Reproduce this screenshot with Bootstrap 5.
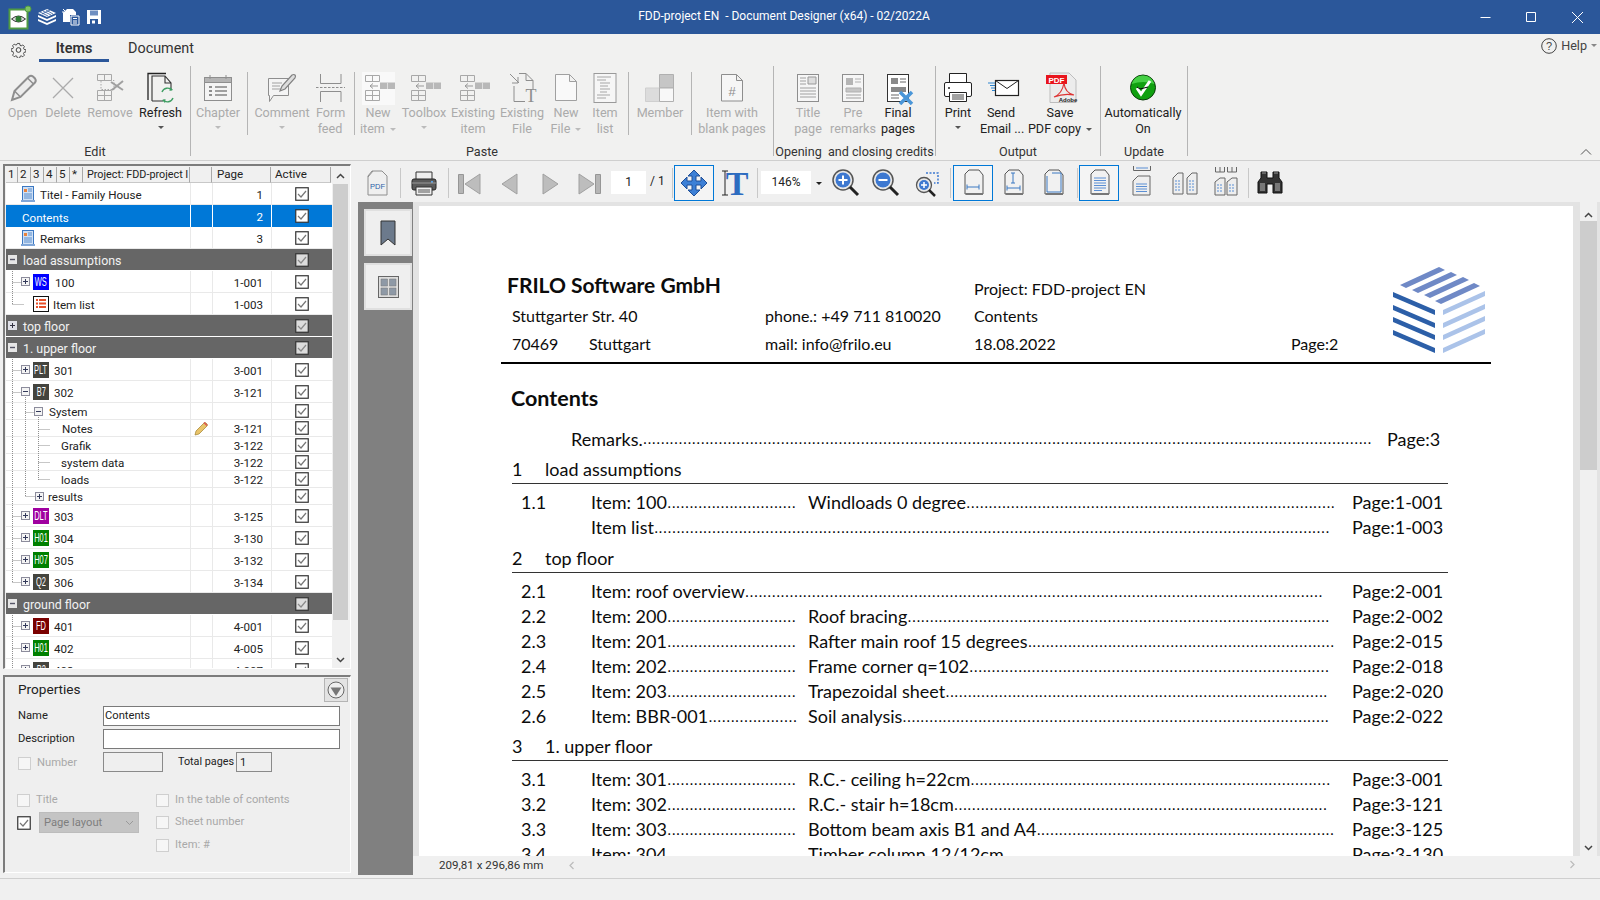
<!doctype html>
<html lang="en">
<head>
<meta charset="utf-8">
<title>FDD-project EN - Document Designer</title>
<link href="https://cdn.jsdelivr.net/npm/bootstrap@5.3.0/dist/css/bootstrap.min.css" rel="stylesheet">
<style>
html,body{height:900px;overflow:hidden}
body{background:#f0f0f0;font-family:Roboto,"Open Sans",sans-serif;color:#222;width:1600px}
.tbar{height:34px;background:#2b579a;color:#fff;position:relative}
.tbar-title{position:absolute;left:0;right:32px;top:0;line-height:32px;text-align:center;font-size:12px}
.tbar-l{padding-left:8px;gap:0}
.win-ctl{position:absolute;right:0;top:0;height:34px}
.rib{background:#f1f1f0;border-bottom:1px solid #cfcfcf;height:127px;position:relative}
.rtabs{height:32px;padding-left:11px;position:relative}
.tab-it{width:70px;height:28px;line-height:29px;text-align:center;font-size:14.4px;color:#333}
.tab-it.on{font-weight:600;border-bottom:3px solid #2b579a}
.tab-one{margin-left:13px}.tab-two{margin-left:17px}
.helpb{position:absolute;right:3px;top:3px;font-size:12.6px;color:#444;gap:4px;line-height:18px}
.rgroups{height:94px}
.rgroup{height:90px;border-right:1px solid #b5b5b5;position:relative;flex:none;align-items:flex-start}
.gp{width:191px;padding-left:2px}.gq{width:583px}.gr{width:162px}.gs{width:165px}.gt{width:87px}
.rlabel{position:absolute;left:0;right:0;top:78px;line-height:16px;text-align:center;font-size:12.6px;color:#333;white-space:nowrap}
.rb.btn{padding:0;border:0;border-radius:0;flex:none;font-size:12.6px;line-height:16px;color:#222;display:block;text-align:center;white-space:nowrap;opacity:1;font-family:inherit}
.rb.btn:disabled{opacity:1;color:#ababab}
.ri{width:40px;height:35px;display:block;margin:4px 0 0 calc(50% - 20px)}
.rb .rcaret{display:inline-block;border-left:3px solid transparent;border-right:3px solid transparent;border-top:3px solid #555;vertical-align:middle;margin-left:2px}
.rb.btn:disabled .rcaret{border-top-color:#bbb}
.rb .sol{display:block;width:6px;height:0;margin:5px auto 0}
.rsep{width:1px;height:63px;margin-top:6px;background:#b5b5b5;flex:none}
.w28{width:28px}.w36{width:36px}.w40{width:40px}.w41{width:41px}.w42{width:42px}.w44{width:44px}.w46{width:46px}.w47{width:47px}.w52{width:52px}.w54{width:54px}.w62{width:62px}.w68{width:68px}.w76{width:76px}.w80{width:80px}.w84{width:84px}
.g1{margin-left:1px}.g2{margin-left:2px}.g3{margin-left:3px}.g4{margin-left:4px}.g5{margin-left:5px}.g6{margin-left:6px}.g10{margin-left:10px}.g12{margin-left:12px}
.mainz{height:717px;padding-top:3px}
.leftc{width:348px;margin-left:3px;flex:none}
.tpanel{height:505px;border-left:2px solid #7c7c7c;border-top:2px solid #7c7c7c;border-right:1px solid #fff;border-bottom:1px solid #fff;background:#f0f0f0;padding:1px 0 0 1px;overflow:hidden}
.thead-cells{height:16px;font-size:11.6px;background:#f0f0f0;color:#222;line-height:15px}
.thc{border-right:1px solid #a8a8a8;border-bottom:1px solid #c8c8c8;padding-left:2px;overflow:hidden;white-space:nowrap;flex:none}
.w12{width:12px}.w13{width:13px}.w107{width:107px;padding-left:4px;font-size:10.8px}.w22{width:22px}.w59{width:59px;padding-left:5px}.w60{width:60px;padding-left:4px}
.tbody-wrap{width:326px;background:#fff;height:485px;overflow:hidden;position:relative}
.tlines{position:absolute;left:0;top:0;width:60px;height:485px;pointer-events:none}
.tr-r{height:22px;display:flex;font-size:11.6px;line-height:22px;border-bottom:1px solid #e9e9e9;color:#222}
.tr-r.sm{height:17px;line-height:17px}
.tr-r.grp{background:#666;color:#f2f2f2;font-size:12.4px;border-bottom:1px solid #fff}
.tr-r.sel{background:#0078d7;color:#fff;border-bottom:0}
.cn{width:185px;flex:none;display:flex;align-items:center;border-right:1px solid #e9e9e9;white-space:nowrap;overflow:hidden}
.cn>span:last-child{padding-top:3px}
.cp{padding-top:1px}
.cm{width:22px;flex:none;border-right:1px solid #e9e9e9;display:flex;align-items:center;justify-content:center}
.cp{width:59px;flex:none;text-align:right;padding-right:8px;border-right:1px solid #e9e9e9}
.ca{width:60px;flex:none;display:flex;align-items:center;justify-content:center}
.sel .cn,.sel .cm,.sel .cp{border-right-color:#fff}
.grp .cn,.grp .cm,.grp .cp{border-right-color:transparent}
.cb{width:14px;height:14px;flex:none}
.xp{width:9px;height:9px;flex:none}
.idoc{width:14px;height:16px;flex:none}
.ilist{width:16px;height:16px;flex:none}
.p2{padding-left:2px}.p15{padding-left:15px}.p16{padding-left:16px}.p27{padding-left:27px}.p28{padding-left:28px}.p29{padding-left:29px}.p55{padding-left:55px}.p56{padding-left:56px}
.ml3{margin-left:3px}.ml4{margin-left:4px}.ml5{margin-left:5px}.ml6{margin-left:6px}
.ptag{width:16px;height:16px;flex:none;color:#fff;font-family:"Liberation Sans",sans-serif;font-size:12px;line-height:16px;overflow:hidden;display:flex;justify-content:center;padding:0!important}
.ptag b{font-weight:400;flex:none;display:block;transform:scaleX(.62)}
.t-blue{background:#0000ff}.t-dark{background:#44443e}.t-pur{background:#a000a0}.t-grn{background:#008000}.t-red{background:#7a0000}
.vscr{width:17px;flex:none;background:#f0f0f0;display:flex;flex-direction:column;height:501px}
.vscr .arr{height:17px;flex:none;display:flex;align-items:center;justify-content:center}
.vscr .thumbz{background:#cdcdcd;margin:0 1px}
.t436{height:436px}.flex-sp{flex:1}
.props{height:198px;margin-top:6px;border-left:2px solid #7c7c7c;border-top:2px solid #7c7c7c;border-right:1px solid #fff;border-bottom:1px solid #fff;background:#efefef;font-size:11.2px;color:#222}
.ptop{height:29px;padding-left:13px;padding-right:2px;font-size:13.6px}
.ptxt{padding-top:2px}
.pbtn{width:24px;height:24px;margin-top:1px;border:1px solid #b4b4b4;background:#e3e3e3;display:flex;align-items:center;justify-content:center}
.frow{height:20px;margin-bottom:3px;padding-left:13px}
.flab{width:85px;flex:none}
.form-control.fin{width:237px;height:20px;min-height:0;padding:0 1px 2px;border:1px solid #7a7a7a;border-radius:0;font-size:11.2px;line-height:17px;color:#222;background:#fff;font-family:inherit}
.form-control.fin2{width:60px;background:#efefef;height:20px;min-height:0;padding:0;border:1px solid #8a8a8a;border-radius:0}
.form-control.fin3{width:36px;background:#efefef;height:20px;min-height:0;padding:0 3px;border:1px solid #8a8a8a;border-radius:0;font-size:11.2px;line-height:17px;font-family:inherit}
.dis{color:#a9a9a9}
.bx{width:13px;height:13px;flex:none;background:#f6f6f6;border:1px solid #cfcfcf}
.flab2{width:85px;flex:none;display:flex;align-items:center;gap:6px;padding-top:3px}
.totl{margin-left:15px;margin-right:2px;font-size:10.8px}
.pgrid{display:grid;grid-template-columns:139px 1fr;grid-auto-rows:22.5px;margin-top:17px;padding-left:12px;align-items:center}
.pcell{display:flex;align-items:center;gap:6px}
.psel{width:100px;height:21px;margin-left:2px;background:#c4c4c4;border:1px solid #bcbcbc;color:#7e7e7e;padding:0 4px;line-height:18px;gap:0;justify-content:space-between}
.rightc{margin-left:7px;width:1242px;flex:none;height:711px}
.tools{height:38px;padding-top:1px;background:#f0f0f0;margin-left:-1px}
.ti{width:40px;height:36px;flex:none}
.tsep{width:1px;height:30px;margin-top:3px;background:#c8c8c8;flex:none}
.tbox{width:40px;height:36px;border:1px solid #0078d7;flex:none;background:#f4f4f4}
.tinp{height:23px;margin-top:6px;background:#fff;text-align:center;font-size:12px;line-height:22px;flex:none;color:#222}
.w35{width:35px}.w50{width:50px}.w26{width:26px}.w15{width:15px}
.tslash{font-size:12px;line-height:33px;padding-left:4px;flex:none}
.tcaret{display:flex;align-items:center;justify-content:center;height:36px;flex:none}
.tcaret i{display:block;border-left:3px solid transparent;border-right:3px solid transparent;border-top:3px solid #222}
.vbody{height:673px}
.sidez{width:55px;background:#808080;padding:7px 1px 0 6px;flex:none}
.sbtn{height:47px;background:#efefef;border:2px solid #e0e0e0;margin-bottom:7px;display:flex;align-items:center;justify-content:center}
.vcol{width:1187px;flex:none}
.vtop{height:654px;background:#e3e3e3;padding:4px 0 0 6px}
.docpage{width:1154px;height:650px;background:#fff;overflow:hidden;font-family:Lato,"Liberation Sans",sans-serif;color:#0c0c0c;font-size:18px;flex:none}
.vgap{width:7px;flex:none}
.pscr{width:17px;flex:none;background:#f0f0f0;margin-top:-4px;height:654px;display:flex;flex-direction:column}
.pscr .arr{height:13px;margin-top:6px;display:flex;align-items:center;justify-content:center;flex:none}
.pscr .tb2{background:#cdcdcd;height:249px;flex:none}
.pscr .arr2{height:17px;display:flex;align-items:center;justify-content:center;flex:none}
.vstatus{height:19px;font-size:11.6px;line-height:19px;padding-left:26px;color:#333;background:#f0f0f0;position:relative;width:1167px}
.harrL{margin-left:25px;width:40px;color:#aaa}
.dochead{margin:66px 0 0 82px;width:990px;height:90px;border-bottom:2px solid #000;display:grid;grid-template-columns:264px 209px 317px 102px 98px;grid-template-rows:30px 28px 28px;box-sizing:content-box;align-items:center;font-size:16px}
.dc1{padding-left:11px}
.dlow{margin-top:-1px}
.frilo{padding-left:6px;font-weight:700;font-size:21px;line-height:24px;margin-top:-4px}
.pt4{padding-top:3px}
.clogo{grid-row:1/4;grid-column:5;width:92px;height:87px;margin-top:-5px;align-self:start}
.w77{display:inline-block;width:77px}
.cont-h{margin:14px 0 0 92px;height:40px;line-height:40px;font-weight:700;font-size:21.5px}
.rem-r{margin:8px 0 0 152px;height:26px;line-height:26px;width:880px;display:flex}
.rem-r .ld{width:807px;flex:none}
.pp{margin-left:9px;flex:none}
.ld{display:flex;overflow:hidden;white-space:nowrap;flex:none}
.ld .dt{flex:none;font-family:"Liberation Sans",sans-serif;font-size:16px}
.sec-h{margin:5px 0 0 93px;width:936px;height:28px;line-height:26px;border-bottom:1px solid #333;display:flex}
.sec-h .sn{width:33px;flex:none}
.sec-a{margin-top:4px}
.it-r{margin-left:102px;height:25px;line-height:25px;display:flex}
.it-n{width:70px;flex:none}
.it-a{width:209px;margin-right:8px}
.it-b{width:535px}
.it-w{width:752px}
.first-r{margin-top:6px}
.bottom-line{border-top:1px solid #cfcfcf;height:22px}
</style>
</head>
<body>
<svg class="d-none" xmlns="http://www.w3.org/2000/svg">
 <symbol id="chk" viewBox="0 0 14 14"><rect x=".75" y=".75" width="12.5" height="12.5" fill="#fff" stroke="#333" stroke-width="1.2"/><path d="M3 7l3 3 5-6" fill="none" stroke="#777" stroke-width="1.2"/></symbol>
 <symbol id="chkg" viewBox="0 0 14 14"><rect x=".75" y=".75" width="12.5" height="12.5" fill="#dcdcdc" stroke="#333" stroke-width="1.2"/><path d="M3 7l3 3 5-6" fill="none" stroke="#8a8a8a" stroke-width="1.2"/></symbol>
 <symbol id="xpp" viewBox="0 0 9 9"><rect x=".5" y=".5" width="8" height="8" fill="#f4f4f4" stroke="#8c8c9c"/><path d="M2 4.500h5M4.500 2v5" stroke="#33395a"/></symbol>
 <symbol id="xpm" viewBox="0 0 9 9"><rect x=".5" y=".5" width="8" height="8" fill="#f4f4f4" stroke="#8c8c9c"/><path d="M2 4.500h5" stroke="#33395a"/></symbol>
 <symbol id="gpp" viewBox="0 0 9 9"><rect width="9" height="9" fill="#dfe0e8"/><path d="M2 4.500h5M4.500 2v5" stroke="#334"/></symbol>
 <symbol id="gpm" viewBox="0 0 9 9"><rect width="9" height="9" fill="#e6e6e6"/><path d="M2 4.500h5" stroke="#556" stroke-width="1.4"/></symbol>
 <symbol id="i-doc" viewBox="0 0 14 16"><rect x="1.500" y=".5" width="11" height="14" fill="#cfe0f5" stroke="#3b78c2"/><path d="M0 14h14v2H0z" fill="#7fa6d8"/><path d="M3 3h3v3H3z" fill="#e9823c"/><path d="M7 3h4M7 5h4M3 8h8M3 10h8M3 12h8" stroke="#3b78c2" stroke-width=".8"/></symbol>
 <symbol id="i-ins" viewBox="0 0 40 36"><g fill="none" stroke="#a8a8a8"><path d="M7.500 5.500h14v6h-14zM14.500 5.500v6M7.500 20.500h14v10h-14zM7.500 25.500h14M14.500 20.500v10"/></g><path d="M22 12.500h15v6.500h-15z" fill="#b8b8b8"/><path d="M29.500 12.500v6.500" stroke="#dedede"/><path d="M12 16h8M12 16l3-2.500M12 16l3 2.500" stroke="#999" fill="none"/></symbol>
 <symbol id="i-pgw" viewBox="0 0 40 36"><path d="M16 6h10l4 5v19H12V10z" fill="#f1f1f1" stroke="#555"/><path d="M13 30h17" stroke="#777" stroke-width="2"/></symbol>
</svg>

<div class="tbar d-flex align-items-center">
 <div class="d-flex align-items-center tbar-l">
  <svg width="24" height="25" viewBox="0 0 24 25"><rect x="1.500" y="4.500" width="18" height="19" fill="#fff" stroke="#4f9a43" stroke-width="2"/><path d="M3.500 14q7-6 14 0q-7 6-14 0z" fill="#ddd" stroke="#333"/><circle cx="10.500" cy="14" r="3" fill="#2d7d32"/><circle cx="20" cy="4" r="3" fill="#7ec465" stroke="#4f9a43"/></svg>
  <svg class="g6" width="20" height="18" viewBox="0 0 20 18"><path d="M9 1l9 4-9 4-9-4zM0 7l9 4 9-4v2l-9 4-9-4zM0 11l9 4 9-4v2l-9 4-9-4z" fill="#fff"/><path d="M2 4l8 4M5 3l8 4M8 2l7 4M12 2l-8 4" stroke="#2b579a" stroke-width=".8"/></svg>
  <svg class="g3" width="20" height="18" viewBox="0 0 20 18"><path d="M6 1h6l3 3v3H9v7H2V5z" fill="#fff"/><path d="M2 1l4 4M4 5H2V3" stroke="#fff" fill="none"/><path d="M10 8h8v9h-8z" fill="#2b579a" stroke="#fff"/><path d="M12 10.500h4M12 13h4M12 15h4" stroke="#fff"/></svg>
  <svg class="g5" width="16" height="16" viewBox="0 0 16 16"><path d="M1 1h14v14H1z" fill="#fff"/><path d="M4 1.500h8v5H4z" fill="#6f8fc1"/><path d="M4 10h8v5H4z" fill="#2b579a"/><path d="M6 11.500h3v3H6z" fill="#fff"/></svg>
 </div>
 <div class="tbar-title">FDD-project EN&nbsp; - Document Designer (x64) - 02/2022A</div>
 <svg class="win-ctl" width="130" height="34" viewBox="0 0 130 34"><path d="M10.500 17.500h10M56.500 12.500h9v9h-9zM102 12l11 11M113 12l-11 11" fill="none" stroke="#fff"/></svg>
</div>

<div class="rib">
 <div class="rtabs d-flex">
  <svg width="15" height="16" viewBox="0 0 16 16" class="mt-2"><circle cx="8" cy="8" r="2.500" fill="none" stroke="#333"/><path d="M6.800 1h2.400l.4 2 1.200.6 1.800-1 1.700 1.700-1 1.800.6 1.200 2 .4v2.400l-2 .4-.6 1.200 1 1.800-1.700 1.700-1.800-1-1.200.6-.4 2H6.800l-.4-2-1.200-.6-1.800 1-1.700-1.700 1-1.800L2.100 9.600l-2-.4V6.800l2-.4.6-1.200-1-1.800 1.700-1.700 1.800 1 1.200-.6z" fill="none" stroke="#333" stroke-width=".9"/></svg>
  <div class="tab-it on tab-one">Items</div>
  <div class="tab-it tab-two">Document</div>
  <div class="helpb d-flex align-items-center">
   <svg width="16" height="16" viewBox="0 0 16 16"><circle cx="8" cy="8" r="7.300" fill="none" stroke="#444"/><text x="8" y="12" text-anchor="middle" font-size="11" fill="#444" font-family="Liberation Sans">?</text></svg>
   <span>Help</span>
   <svg width="6" height="4" viewBox="0 0 6 4"><path d="M0 0h6L3 3z" fill="#888"/></svg>
  </div>
 </div>
 <div class="rgroups d-flex">
  <div class="rgroup gp d-flex">
   <button type="button" class="btn rb w41" disabled><svg class="ri" viewBox="0 0 40 35"><path d="M9 30l2.500-9L26 6.500q2-1.500 4 0l2 2q1.500 2 0 4L17.500 27z" fill="#ececec" stroke="#8e8e8e" stroke-width="2"/><path d="M11.500 21l6 6M24.500 8l6 6" stroke="#8e8e8e" stroke-width="1.500"/></svg>Open</button>
   <button type="button" class="btn rb w40" disabled><svg class="ri" viewBox="0 0 40 35"><path d="M10 4l20 20M30 4L10 24" stroke="#ababab" stroke-width="1.300" transform="translate(0 4)"/></svg>Delete</button>
   <button type="button" class="btn rb w54" disabled><svg class="ri" viewBox="0 0 40 35"><g fill="none" stroke="#a8a8a8"><path d="M7.500 4.500h14v6h-14zM14.500 4.500v6M7.500 20.500h14v10h-14zM7.500 25.500h14M14.500 20.500v10"/><path d="M11 11v9M11 10.500h13v9H11" stroke-dasharray="1.500 1.500"/></g><path d="M21 12l12 8M33 11l-11 9" stroke="#a0a0a0" stroke-width="2"/></svg>Remove</button>
   <button type="button" class="btn rb w47"><svg class="ri" viewBox="0 0 40 35"><path d="M7 30V3.500h18" fill="none" stroke="#222" stroke-width="1.300"/><path d="M11 31V6h13l6 7v6M11 31h11M24 6v7h6" fill="none" stroke="#333" stroke-width="1.100"/><path d="M21 22a6 6 0 0 1 10-2M32 28a6 6 0 0 1-10 2" fill="none" stroke="#3f9e63" stroke-width="1.400"/><path d="M29 17l3 3-3.500 1zM24 33l-3-3 3.500-1z" fill="#3f9e63"/></svg>Refresh<span class="rcaret sol"></span></button>
   <div class="rlabel">Edit</div>
  </div>
  <div class="rgroup gq d-flex">
   <button type="button" class="btn rb w54" disabled><svg class="ri" viewBox="0 0 40 35"><rect x="6.500" y="7.500" width="27" height="23" fill="#f4f4f4" stroke="#8e8e8e"/><path d="M6.500 7.500h27v5h-27z" fill="#b4b4b4" stroke="#8e8e8e"/><path d="M12 5v4M28 5v4" stroke="#8e8e8e"/><path d="M11 16h3v2h-3zM11 20h3v2h-3zM11 24h3v2h-3z" fill="#8e8e8e"/><path d="M17 17h12M17 21h12M17 25h12" stroke="#a0a0a0" stroke-width="2"/></svg>Chapter<span class="rcaret sol"></span></button>
   <div class="rsep g2"></div>
   <button type="button" class="btn rb w68" disabled><svg class="ri" viewBox="0 0 40 35"><path d="M6.500 8.500h20v17h-15l-4 6v-6h-1z" fill="#f4f4f4" stroke="#8e8e8e"/><path d="M10 13h10M10 16h8M10 19h12" stroke="#a0a0a0"/><path d="M18 21l2-5 10-11q2-1 3 0t0 3L23 19z" fill="#ddd" stroke="#808080" stroke-width="1.200"/></svg>Comment<span class="rcaret sol"></span></button>
   <button type="button" class="btn rb w28" disabled><svg class="ri" viewBox="0 0 40 35"><path d="M10.500 4v9.500H31V4M10.500 32V21.500H31V32" fill="none" stroke="#8e8e8e"/><path d="M6 17.500h29" stroke="#8e8e8e" stroke-dasharray="2.500 1.500"/></svg>Form<br>feed</button>
   <div class="rsep g10"></div>
   <button type="button" class="btn rb w46" disabled><svg class="ri" viewBox="0 0 40 35"><rect x="4" y="2" width="33" height="33" fill="#f9f9f9"/><use href="#i-ins" width="40" height="36"/></svg>New<br>item <span class="rcaret"></span></button>
   <button type="button" class="btn rb w46" disabled><svg class="ri" viewBox="0 0 40 35"><use href="#i-ins" width="40" height="36"/></svg>Toolbox<span class="rcaret sol"></span></button>
   <button type="button" class="btn rb w52" disabled><svg class="ri" viewBox="0 0 40 35"><use href="#i-ins" width="40" height="36"/></svg>Existing<br>item</button>
   <button type="button" class="btn rb w46" disabled><svg class="ri" viewBox="0 0 40 35"><path d="M17 3.500h7l7 7V20M12 16v15.500h11M24 3.500v7h7" fill="none" stroke="#8e8e8e"/><path d="M8 4l9 9M16 7v6h-6" fill="none" stroke="#8e8e8e"/><text x="29" y="32" text-anchor="middle" font-family="Liberation Serif" font-size="18" fill="#8e8e8e">T</text></svg>Existing<br>File</button>
   <button type="button" class="btn rb w42" disabled><svg class="ri" viewBox="0 0 40 35"><path d="M9.500 4.500h14l7 7v19h-21zM23.500 4.500v7h7" fill="#f9f9f9" stroke="#a0a0a0"/></svg>New<br>File <span class="rcaret"></span></button>
   <button type="button" class="btn rb w36" disabled><svg class="ri" viewBox="0 0 40 35"><rect x="9" y="3.500" width="22" height="29" fill="#f6f6f6" stroke="#9a9a9a"/><path d="M12 7h14M12 10h9M15 13h10M15 16h8M15 19h10M15 22h7M12 25h13M12 28h9" stroke="#a6a6a6"/></svg>Item<br>list</button>
   <div class="rsep g5"></div>
   <button type="button" class="btn rb w62" disabled><svg class="ri" viewBox="0 0 40 35"><path d="M19.500 4.500h14v13.500h-14z" fill="#c6c6c6" stroke="#b0b0b0"/><path d="M5.500 18h14v13.500h-14z" fill="#dcdcdc" stroke="#cfcfcf"/><path d="M19.500 18h14v13.500h-14z" fill="#f8f8f8" stroke="#b0b0b0"/></svg>Member</button>
   <div class="rsep"></div>
   <button type="button" class="btn rb w80" disabled><svg class="ri" viewBox="0 0 40 35"><path d="M9.500 4.500h15l6 6v20.500h-21zM24.500 4.500v6h6" fill="#f6f6f6" stroke="#8e8e8e"/><text x="20" y="26" text-anchor="middle" font-family="Liberation Sans" font-size="13" fill="#8e8e8e">#</text></svg>Item with<br>blank pages</button>
   <div class="rlabel">Paste</div>
  </div>
  <div class="rgroup gr d-flex">
   <button type="button" class="btn rb w44 g12" disabled><svg class="ri" viewBox="0 0 40 35"><rect x="9.500" y="4.500" width="21" height="27" fill="#f6f6f6" stroke="#8e8e8e"/><path d="M12 8h6M12 11h6M12 14h6M12 18h16M12 21h16M12 24h16M12 27h16" stroke="#a0a0a0"/><path d="M20 7h8v7h-8z" fill="#ddd" stroke="#999"/></svg>Title<br>page</button>
   <button type="button" class="btn rb w46" disabled><svg class="ri" viewBox="0 0 40 35"><rect x="9.500" y="4.500" width="21" height="27" fill="#f6f6f6" stroke="#8e8e8e"/><path d="M13 8h7v7h-7z" fill="#b5b5b5"/><path d="M22 9h6M22 12h6M13 18h15v4H13z" stroke="#b0b0b0" fill="#c6c6c6"/><path d="M13 25h15M13 28h15" stroke="#a0a0a0"/></svg>Pre<br>remarks</button>
   <button type="button" class="btn rb w44"><svg class="ri" viewBox="0 0 40 35"><rect x="9.500" y="4.500" width="21" height="27" fill="#fff" stroke="#333"/><path d="M13 8h7v6h-7z" fill="#8a8a8a"/><path d="M22 9h6M22 12h6M13 25h8M13 28h8" stroke="#666"/><path d="M13 17h15v5H13z" fill="#888"/><path d="M22 22l12 12M34 22L22 34" stroke="#4a96d8" stroke-width="3.500"/></svg>Final<br>pages</button>
   <div class="rlabel">Opening&nbsp; and closing credits</div>
  </div>
  <div class="rgroup gs d-flex">
   <button type="button" class="btn rb w44"><svg class="ri" viewBox="0 0 40 35"><path d="M11.500 13V3.500h17V13" fill="#fff" stroke="#222"/><rect x="6.500" y="12.500" width="27" height="14" rx="1.500" fill="#fff" stroke="#222"/><path d="M10 18h2" stroke="#222" stroke-width="1.500"/><path d="M11.500 22.500h17v9h-17z" fill="#fff" stroke="#222"/><path d="M14 25h12M14 27h12M14 29h12" stroke="#444"/></svg>Print<span class="rcaret sol"></span></button>
   <button type="button" class="btn rb w42"><svg class="ri" viewBox="0 0 40 35"><path d="M7 13h7M9 15.500h5M10 18h4M11 20.500h3" stroke="#2e86d0"/><rect x="14.500" y="10.500" width="23" height="15" fill="#fff" stroke="#222" stroke-width="1.200"/><path d="M14.500 10.500l11.500 8 11.500-8" fill="none" stroke="#222"/></svg>Send<br>Email ...</button>
   <button type="button" class="btn rb w76"><svg class="ri" viewBox="0 0 40 35"><path d="M10 3h19l7 7v22.500H10z" fill="#ececec" stroke="#bdbdbd"/><path d="M6 5h21v9H6z" fill="#e8141c"/><text x="16.500" y="12.500" text-anchor="middle" font-family="Liberation Sans" font-weight="700" font-size="8" fill="#fff">PDF</text><path d="M14 27q8-3 10-14q1 10 10 12q-10-2-20 2z" fill="none" stroke="#d33" stroke-width="1.200"/><text x="28" y="31.500" text-anchor="middle" font-family="Liberation Sans" font-weight="700" font-size="6" fill="#222">Adobe</text></svg>Save<br>PDF copy <span class="rcaret"></span></button>
   <div class="rlabel">Output</div>
  </div>
  <div class="rgroup gt d-flex">
   <button type="button" class="btn rb w84"><svg class="ri" viewBox="0 0 40 35"><circle cx="20" cy="17.500" r="12.500" fill="#10a010" stroke="#0a3a0a"/><path d="M8.500 14a12 12 0 0 1 23 0q-11-4-23 0z" fill="#45cf45"/><path d="M14 18l4 6 9-13" fill="none" stroke="#fff" stroke-width="3"/><path d="M14 17l3 2 8-2" fill="none" stroke="#000" stroke-width="1"/></svg>Automatically<br>On</button>
   <div class="rlabel">Update</div>
  </div>
  <svg class="ms-auto me-2 mt-auto mb-1" width="12" height="8" viewBox="0 0 12 8"><path d="M1 6.500l5-5 5 5" fill="none" stroke="#555"/></svg>
 </div>
</div>

<div class="mainz d-flex">
 <div class="leftc d-flex flex-column">
  <div class="tpanel d-flex">
   <div class="d-flex flex-column">
    <div class="thead-cells d-flex">
     <div class="thc w12">1</div><div class="thc w13">2</div><div class="thc w13">3</div><div class="thc w13">4</div><div class="thc w13">5</div><div class="thc w13">*</div>
     <div class="thc w107">Project: FDD-project I</div><div class="thc w22"></div><div class="thc w59">Page</div><div class="thc w60">Active</div>
    </div>
    <div class="tbody-wrap">
     <div class="tr-r"><div class="cn p15"><svg class="idoc"><use href="#i-doc"/></svg><span class="ml5">Titel - Family House</span></div><div class="cm"></div><div class="cp">1</div><div class="ca"><svg class="cb"><use href="#chk"/></svg></div></div>
     <div class="tr-r sel"><div class="cn p16"><span>Contents</span></div><div class="cm"></div><div class="cp">2</div><div class="ca"><svg class="cb"><use href="#chk"/></svg></div></div>
     <div class="tr-r"><div class="cn p15"><svg class="idoc"><use href="#i-doc"/></svg><span class="ml5">Remarks</span></div><div class="cm"></div><div class="cp">3</div><div class="ca"><svg class="cb"><use href="#chk"/></svg></div></div>
     <div class="tr-r grp"><div class="cn p2"><svg class="xp"><use href="#gpm"/></svg><span class="ml6">load assumptions</span></div><div class="cm"></div><div class="cp"></div><div class="ca"><svg class="cb"><use href="#chkg"/></svg></div></div>
     <div class="tr-r"><div class="cn p15"><svg class="xp"><use href="#xpp"/></svg><span class="ptag t-blue ml3"><b>WS</b></span><span class="ml6">100</span></div><div class="cm"></div><div class="cp">1-001</div><div class="ca"><svg class="cb"><use href="#chk"/></svg></div></div>
     <div class="tr-r"><div class="cn p27"><svg class="ilist" viewBox="0 0 16 16"><rect x=".5" y=".5" width="15" height="15" fill="#fff" stroke="#111"/><path d="M3 3h2v2H3zM6 3h7v2H6zM3 6.500h2v2H3zM6 6.500h7v2H6zM3 10h2v2H3zM6 10h7v2H6z" fill="#e8502a"/></svg><span class="ml4">Item list</span></div><div class="cm"></div><div class="cp">1-003</div><div class="ca"><svg class="cb"><use href="#chk"/></svg></div></div>
     <div class="tr-r grp"><div class="cn p2"><svg class="xp"><use href="#gpp"/></svg><span class="ml6">top floor</span></div><div class="cm"></div><div class="cp"></div><div class="ca"><svg class="cb"><use href="#chkg"/></svg></div></div>
     <div class="tr-r grp"><div class="cn p2"><svg class="xp"><use href="#gpm"/></svg><span class="ml6">1. upper floor</span></div><div class="cm"></div><div class="cp"></div><div class="ca"><svg class="cb"><use href="#chkg"/></svg></div></div>
     <div class="tr-r"><div class="cn p15"><svg class="xp"><use href="#xpp"/></svg><span class="ptag t-dark ml3"><b>PLT</b></span><span class="ml5">301</span></div><div class="cm"></div><div class="cp">3-001</div><div class="ca"><svg class="cb"><use href="#chk"/></svg></div></div>
     <div class="tr-r"><div class="cn p15"><svg class="xp"><use href="#xpm"/></svg><span class="ptag t-dark ml3"><b>B7</b></span><span class="ml5">302</span></div><div class="cm"></div><div class="cp">3-121</div><div class="ca"><svg class="cb"><use href="#chk"/></svg></div></div>
     <div class="tr-r sm"><div class="cn p28"><svg class="xp"><use href="#xpm"/></svg><span class="ml6">System</span></div><div class="cm"></div><div class="cp"></div><div class="ca"><svg class="cb"><use href="#chk"/></svg></div></div>
     <div class="tr-r sm"><div class="cn p56"><span>Notes</span></div><div class="cm"><svg width="15" height="15" viewBox="0 0 15 15"><path d="M1 14l1-4 8-8q1-1 2 0l1 1q1 1 0 2l-8 8z" fill="#e9c46a" stroke="#a0812c" stroke-width=".7"/><path d="M10 1.500l3 3" stroke="#d55" stroke-width="1.500"/></svg></div><div class="cp">3-121</div><div class="ca"><svg class="cb"><use href="#chk"/></svg></div></div>
     <div class="tr-r sm"><div class="cn p55"><span>Grafik</span></div><div class="cm"></div><div class="cp">3-122</div><div class="ca"><svg class="cb"><use href="#chk"/></svg></div></div>
     <div class="tr-r sm"><div class="cn p55"><span>system data</span></div><div class="cm"></div><div class="cp">3-122</div><div class="ca"><svg class="cb"><use href="#chk"/></svg></div></div>
     <div class="tr-r sm"><div class="cn p55"><span>loads</span></div><div class="cm"></div><div class="cp">3-122</div><div class="ca"><svg class="cb"><use href="#chk"/></svg></div></div>
     <div class="tr-r sm"><div class="cn p29"><svg class="xp"><use href="#xpp"/></svg><span class="ml4">results</span></div><div class="cm"></div><div class="cp"></div><div class="ca"><svg class="cb"><use href="#chk"/></svg></div></div>
     <div class="tr-r"><div class="cn p15"><svg class="xp"><use href="#xpp"/></svg><span class="ptag t-pur ml3"><b>DLT</b></span><span class="ml5">303</span></div><div class="cm"></div><div class="cp">3-125</div><div class="ca"><svg class="cb"><use href="#chk"/></svg></div></div>
     <div class="tr-r"><div class="cn p15"><svg class="xp"><use href="#xpp"/></svg><span class="ptag t-grn ml3"><b>H01</b></span><span class="ml5">304</span></div><div class="cm"></div><div class="cp">3-130</div><div class="ca"><svg class="cb"><use href="#chk"/></svg></div></div>
     <div class="tr-r"><div class="cn p15"><svg class="xp"><use href="#xpp"/></svg><span class="ptag t-grn ml3"><b>H07</b></span><span class="ml5">305</span></div><div class="cm"></div><div class="cp">3-132</div><div class="ca"><svg class="cb"><use href="#chk"/></svg></div></div>
     <div class="tr-r"><div class="cn p15"><svg class="xp"><use href="#xpp"/></svg><span class="ptag t-dark ml3"><b>Q2</b></span><span class="ml5">306</span></div><div class="cm"></div><div class="cp">3-134</div><div class="ca"><svg class="cb"><use href="#chk"/></svg></div></div>
     <div class="tr-r grp"><div class="cn p2"><svg class="xp"><use href="#gpm"/></svg><span class="ml6">ground floor</span></div><div class="cm"></div><div class="cp"></div><div class="ca"><svg class="cb"><use href="#chkg"/></svg></div></div>
     <div class="tr-r"><div class="cn p15"><svg class="xp"><use href="#xpp"/></svg><span class="ptag t-red ml3"><b>FD</b></span><span class="ml5">401</span></div><div class="cm"></div><div class="cp">4-001</div><div class="ca"><svg class="cb"><use href="#chk"/></svg></div></div>
     <div class="tr-r"><div class="cn p15"><svg class="xp"><use href="#xpp"/></svg><span class="ptag t-grn ml3"><b>H01</b></span><span class="ml5">402</span></div><div class="cm"></div><div class="cp">4-005</div><div class="ca"><svg class="cb"><use href="#chk"/></svg></div></div>
     <div class="tr-r"><div class="cn p15"><svg class="xp"><use href="#xpp"/></svg><span class="ptag t-dark ml3"><b>B2</b></span><span class="ml5">403</span></div><div class="cm"></div><div class="cp">4-007</div><div class="ca"><svg class="cb"><use href="#chk"/></svg></div></div>
     <svg class="tlines" viewBox="0 0 60 485"><g stroke="#8f8f8f" stroke-dasharray="1 1" fill="none">
      <path d="M6.500 88V121M6.500 99.500H15M6.500 121.500H18M6.500 176V399M6.500 187.500H15M6.500 209.500H15M6.500 333.500H15M6.500 355.500H15M6.500 377.500H15M6.500 399.500H15M19.500 214V314M19.500 229.500H28M19.500 313.500H29M32.500 234V297M32.500 246.500H44M32.500 262.500H44M32.500 279.500H44M32.500 296.500H44M6.500 432V485M6.500 443.500H15M6.500 465.500H15"/>
     </g></svg>
    </div>
   </div>
   <div class="vscr">
    <div class="arr"><svg width="9" height="6" viewBox="0 0 9 6"><path d="M1 5l3.500-3.500L8 5" fill="none" stroke="#444" stroke-width="1.500"/></svg></div>
    <div class="thumbz t436"></div>
    <div class="flex-sp"></div>
    <div class="arr"><svg width="9" height="6" viewBox="0 0 9 6"><path d="M1 1l3.500 3.500L8 1" fill="none" stroke="#444" stroke-width="1.500"/></svg></div>
   </div>
  </div>
  <div class="props">
   <div class="ptop d-flex justify-content-between">
    <span class="ptxt">Properties</span>
    <div class="pbtn"><svg width="18" height="18" viewBox="0 0 18 18"><circle cx="9" cy="9" r="8" fill="#eee" stroke="#666"/><path d="M3.500 6.500h11L9 15z" fill="#777"/></svg></div>
   </div>
   <div class="frow d-flex align-items-center"><span class="flab">Name</span><input class="form-control fin" value="Contents"></div>
   <div class="frow d-flex align-items-center"><span class="flab">Description</span><input class="form-control fin" value=""></div>
   <div class="frow d-flex align-items-center"><span class="flab2 dis"><span class="bx"></span>Number</span><input class="form-control fin2" value=""><span class="totl">Total pages</span><input class="form-control fin3" value="1"></div>
   <div class="pgrid">
    <div class="pcell dis"><span class="bx"></span>Title</div>
    <div class="pcell dis"><span class="bx"></span>In the table of contents</div>
    <div class="pcell"><svg class="cb"><use href="#chk"/></svg><div class="psel d-flex align-items-center"><span>Page layout</span><svg width="9" height="6" viewBox="0 0 9 6"><path d="M1 1l3.500 3.500L8 1" fill="none" stroke="#999"/></svg></div></div>
    <div class="pcell dis"><span class="bx"></span>Sheet number</div>
    <div></div>
    <div class="pcell dis"><span class="bx"></span>Item: #</div>
   </div>
  </div>
 </div>

 <div class="rightc d-flex flex-column">
  <div class="tools d-flex">
   <svg class="ti" viewBox="0 0 40 36"><path d="M15 6h10l5 5v19H11V11z" fill="#efefef" stroke="#8e8e8e"/><path d="M11 12l5-6" stroke="#8e8e8e"/><text x="20.500" y="24" text-anchor="middle" font-family="Liberation Sans" font-size="7.500" fill="#2b5fa8">PDF</text></svg>
   <div class="tsep g3"></div>
   <svg class="ti g3" viewBox="0 0 40 36"><path d="M12 15V7h16v8" fill="#eee" stroke="#333"/><rect x="8" y="14" width="24" height="11" rx="2" fill="#5a5a5a" stroke="#222"/><path d="M27 17h2" stroke="#5aa0e0" stroke-width="2"/><path d="M12 22h16v8H12z" fill="#eee" stroke="#333"/><path d="M14 25h12M14 27h12" stroke="#555"/><path d="M8 18h24" stroke="#999"/></svg>
   <div class="tsep g4"></div>
   <svg class="ti" viewBox="0 0 40 36"><path d="M9.500 9.500h5v19h-5z" fill="#b5b5b5" stroke="#969696"/><path d="M31 9v20L16 19z" fill="#bdbdbd" stroke="#a0a0a0"/></svg>
   <svg class="ti" viewBox="0 0 40 36"><path d="M28 9v20L13 19z" fill="#bdbdbd" stroke="#a0a0a0"/></svg>
   <svg class="ti g1" viewBox="0 0 40 36"><path d="M13 9v20L28 19z" fill="#bdbdbd" stroke="#a0a0a0"/></svg>
   <svg class="ti" viewBox="0 0 40 36"><path d="M9 9v20L24 19z" fill="#bdbdbd" stroke="#a0a0a0"/><path d="M25.500 9.500h5v19h-5z" fill="#b5b5b5" stroke="#969696"/></svg>
   <div class="tinp w35 g1">1</div>
   <div class="tslash w26">/ 1</div>
   <div class="tsep"></div>
   <div class="tbox g1"><svg width="38" height="34" viewBox="0 0 38 34"><path d="M19 4l6 6h-4v5h5v-4l6 6-6 6v-4h-5v5h4l-6 6-6-6h4v-5h-5v4l-6-6 6-6v4h5v-5h-4z" fill="#3d80d6" stroke="#1f4f98"/></svg></div>
   <svg class="ti" viewBox="0 0 40 36"><path d="M8 6h6M8 30h6M11 6v24" fill="none" stroke="#222" stroke-width="1"/><text x="23" y="30" text-anchor="middle" font-family="Liberation Serif" font-weight="700" font-size="34" fill="#2d6cc0">T</text></svg>
   <div class="tsep g3"></div>
   <div class="tinp w50 g3">146%</div>
   <div class="tcaret w15"><i></i></div>
   <svg class="ti" viewBox="0 0 40 36"><circle cx="17" cy="15" r="10" fill="#e8e8e8" stroke="#555" stroke-width="1.500"/><circle cx="17" cy="15" r="7.500" fill="#3d78d0"/><path d="M12.500 15h9M17 10.500v9" stroke="#fff" stroke-width="2"/><path d="M24 22l8 8" stroke="#222" stroke-width="3"/></svg>
   <svg class="ti" viewBox="0 0 40 36"><circle cx="17" cy="15" r="10" fill="#e8e8e8" stroke="#555" stroke-width="1.500"/><circle cx="17" cy="15" r="7.500" fill="#3d78d0"/><path d="M12.500 15h9" stroke="#fff" stroke-width="2"/><path d="M24 22l8 8" stroke="#222" stroke-width="3"/></svg>
   <svg class="ti g1" viewBox="0 0 40 36"><circle cx="17" cy="20" r="7.500" fill="#e8e8e8" stroke="#555" stroke-width="1.300"/><circle cx="17" cy="20" r="5" fill="#3d78d0"/><path d="M14 20h6M17 17v6" stroke="#fff" stroke-width="1.500"/><path d="M22 25l6 6" stroke="#222" stroke-width="2.500"/><path d="M19 8h12v10h-4" fill="none" stroke="#3d78d0" stroke-dasharray="2 1.500" stroke-width="1.500"/></svg>
   <div class="tsep g3"></div>
   <div class="tbox g2"><svg width="38" height="34" viewBox="0 0 38 34"><use href="#i-pgw" x="-1" y="-2" width="40" height="36"/><path d="M13 21h12M13 18.500v5M25 18.500v5" stroke="#3b78c2" fill="none"/></svg></div>
   <svg class="ti" viewBox="0 0 40 36"><use href="#i-pgw" y="-1"/><path d="M14 23h13M14 20.500v5M27 20.500v5M20 8v10M18 8h4M18 18h4" stroke="#3b78c2" fill="none"/></svg>
   <svg class="ti" viewBox="0 0 40 36"><use href="#i-pgw" y="-1"/><path d="M14 11v16h14V8h-9" stroke="#3b78c2" fill="none"/></svg>
   <div class="tsep g4"></div>
   <div class="tbox g1"><svg width="38" height="34" viewBox="0 0 38 34"><use href="#i-pgw" x="-1" y="-2" width="40" height="36"/><path d="M14 12h12M14 14.500h12M14 17h12M14 19.500h12M14 22h12M14 24.500h8" stroke="#5b8fd4"/></svg></div>
   <svg class="ti g3" viewBox="0 0 40 36"><path d="M11.500 1v4.500h17V1" fill="#eee" stroke="#666"/><path d="M14 3h12" stroke="#5b8fd4"/><path d="M16 11h12v19H11V16z" fill="#eee" stroke="#666"/><path d="M14 19h11M14 21.500h11M14 24h11M14 26.500h11" stroke="#5b8fd4"/></svg>
   <svg class="ti g3" viewBox="0 0 40 36"><path d="M13 8h5v21H8V13zM27 8h5v21H22V13z" fill="#eee" stroke="#666"/><path d="M11 15v11M14 15v11M25 15v11M28 15v11" stroke="#5b8fd4" stroke-dasharray="2 1"/></svg>
   <svg class="ti g1" viewBox="0 0 40 36"><path d="M9.500 2v5h9V2M21.500 2v5h9V2M14 2v5M26 2v5" fill="#eee" stroke="#666"/><path d="M14 13h5v17H9V17zM26 13h5v17H21V17z" fill="#eee" stroke="#666"/><path d="M12 19v9M15 19v9M24 19v9M27 19v9" stroke="#5b8fd4" stroke-dasharray="2 1"/></svg>
   <div class="tsep g2"></div>
   <svg class="ti g1" viewBox="0 0 40 36"><path d="M11 7h6v6h6V7h6v6l3 4v11h-9v-9h-6v9H8V17l3-4z" fill="#333" stroke="#111"/><path d="M10 18h5v8h-5zM25 18h5v8h-5z" fill="#777"/><path d="M12 8h4M24 8h4" stroke="#999"/></svg>
  </div>
  <div class="vbody d-flex">
   <div class="sidez">
    <div class="sbtn"><svg width="16" height="26" viewBox="0 0 16 26"><path d="M1 1h14v24l-7-6-7 6z" fill="#6c7a8c" stroke="#333"/></svg></div>
    <div class="sbtn"><svg width="21" height="22" viewBox="0 0 21 22"><rect x=".5" y=".5" width="20" height="21" fill="#ddd" stroke="#666"/><path d="M3 3h6.500v7H3zM11.500 3H18v7h-6.500zM3 12h6.500v7H3zM11.500 12H18v7h-6.500z" fill="#8e99a6" stroke="#777" stroke-width=".5"/></svg></div>
   </div>
   <div class="vcol">
    <div class="vtop d-flex">
     <div class="docpage">
      <div class="dochead">
       <div class="frilo">FRILO Software GmbH</div><div></div><div class="pt4">Project: FDD-project EN</div><div></div>
       <svg class="clogo" viewBox="0 0 92 87"><g fill="#6f89c6"><path d="M7 18L46 0l6 3-39 18z"/><path d="M19 23L58 5l6 3-39 18z"/><path d="M31 28L70 10l6 3-39 18z"/><path d="M42 34L81 16l6 3-39 18z"/></g><g fill="#2c5fa8"><path d="M0 25l42 18v5L0 30z"/><path d="M0 38l42 18v5L0 43z"/><path d="M0 50l42 18v5L0 55z"/><path d="M0 63l42 18v5L0 68z"/></g><g fill="#abc3e9"><path d="M92 24L50 43v5l42-19z"/><path d="M92 37L50 56v5l42-19z"/><path d="M92 49L50 68v5l42-19z"/><path d="M92 62L50 81v5l42-19z"/></g></svg>
       <div class="dc1">Stuttgarter Str. 40</div><div>phone.: +49 711 810020</div><div>Contents</div><div></div>
       <div class="dc1 dlow"><span class="w77">70469</span>Stuttgart</div><div class="dlow">mail: info@frilo.eu</div><div class="dlow">18.08.2022</div><div class="dlow">Page:2</div>
      </div>
      <div class="cont-h">Contents</div>
      <div class="rem-r"><div class="ld"><span>Remarks.</span><span class="dt">....................................................................................................................................................................</span></div><div class="pp">Page:3</div></div>

      <div class="sec-h sec-a"><span class="sn">1</span>load assumptions</div>
      <div class="it-r first-r"><div class="it-n">1.1</div><div class="ld it-a"><span>Item: 100</span><span class="dt">.............................</span></div><div class="ld it-b"><span>Windloads 0 degree</span><span class="dt">...................................................................................</span></div><div class="pp">Page:1-001</div></div>
      <div class="it-r"><div class="it-n"></div><div class="ld it-w"><span>Item list</span><span class="dt">........................................................................................................................................................</span></div><div class="pp">Page:1-003</div></div>

      <div class="sec-h"><span class="sn">2</span>top floor</div>
      <div class="it-r first-r"><div class="it-n">2.1</div><div class="ld it-w"><span>Item: roof overview</span><span class="dt">..................................................................................................................................</span></div><div class="pp">Page:2-001</div></div>
      <div class="it-r"><div class="it-n">2.2</div><div class="ld it-a"><span>Item: 200</span><span class="dt">.............................</span></div><div class="ld it-b"><span>Roof bracing</span><span class="dt">...............................................................................................</span></div><div class="pp">Page:2-002</div></div>
      <div class="it-r"><div class="it-n">2.3</div><div class="ld it-a"><span>Item: 201</span><span class="dt">.............................</span></div><div class="ld it-b"><span>Rafter main roof 15 degrees</span><span class="dt">.....................................................................</span></div><div class="pp">Page:2-015</div></div>
      <div class="it-r"><div class="it-n">2.4</div><div class="ld it-a"><span>Item: 202</span><span class="dt">.............................</span></div><div class="ld it-b"><span>Frame corner q=102</span><span class="dt">.................................................................................</span></div><div class="pp">Page:2-018</div></div>
      <div class="it-r"><div class="it-n">2.5</div><div class="ld it-a"><span>Item: 203</span><span class="dt">.............................</span></div><div class="ld it-b"><span>Trapezoidal sheet</span><span class="dt">......................................................................................</span></div><div class="pp">Page:2-020</div></div>
      <div class="it-r"><div class="it-n">2.6</div><div class="ld it-a"><span>Item: BBR-001</span><span class="dt">....................</span></div><div class="ld it-b"><span>Soil analysis</span><span class="dt">................................................................................................</span></div><div class="pp">Page:2-022</div></div>

      <div class="sec-h sec-a"><span class="sn">3</span>1. upper floor</div>
      <div class="it-r first-r"><div class="it-n">3.1</div><div class="ld it-a"><span>Item: 301</span><span class="dt">.............................</span></div><div class="ld it-b"><span>R.C.- ceiling h=22cm</span><span class="dt">.................................................................................</span></div><div class="pp">Page:3-001</div></div>
      <div class="it-r"><div class="it-n">3.2</div><div class="ld it-a"><span>Item: 302</span><span class="dt">.............................</span></div><div class="ld it-b"><span>R.C.- stair h=18cm</span><span class="dt">....................................................................................</span></div><div class="pp">Page:3-121</div></div>
      <div class="it-r"><div class="it-n">3.3</div><div class="ld it-a"><span>Item: 303</span><span class="dt">.............................</span></div><div class="ld it-b"><span>Bottom beam axis B1 and A4</span><span class="dt">...................................................................</span></div><div class="pp">Page:3-125</div></div>
      <div class="it-r"><div class="it-n">3.4</div><div class="ld it-a"><span>Item: 304</span><span class="dt">.............................</span></div><div class="ld it-b"><span>Timber column 12/12cm</span><span class="dt">..........................................................................</span></div><div class="pp">Page:3-130</div></div>
     </div>
     <div class="vgap"></div>
     <div class="pscr">
      <div class="arr"><svg width="9" height="6" viewBox="0 0 9 6"><path d="M1 5l3.500-3.500L8 5" fill="none" stroke="#444" stroke-width="1.500"/></svg></div>
      <div class="tb2"></div>
      <div class="flex-sp"></div>
      <div class="arr2"><svg width="9" height="6" viewBox="0 0 9 6"><path d="M1 1l3.500 3.500L8 1" fill="none" stroke="#444" stroke-width="1.500"/></svg></div>
     </div>
    </div>
    <div class="vstatus d-flex"><span>209,81 x 296,86 mm</span><span class="harrL"><svg width="7" height="9" viewBox="0 0 7 9"><path d="M5.500 1L2 4.500 5.500 8" fill="none" stroke="#bbb" stroke-width="1.200"/></svg></span><svg class="ms-auto me-1 mt-1" width="7" height="9" viewBox="0 0 7 9"><path d="M1.500 1L5 4.500 1.500 8" fill="none" stroke="#bbb" stroke-width="1.200"/></svg></div>
   </div>
  </div>
 </div>
</div>
<div class="bottom-line"></div>
</body>
</html>
